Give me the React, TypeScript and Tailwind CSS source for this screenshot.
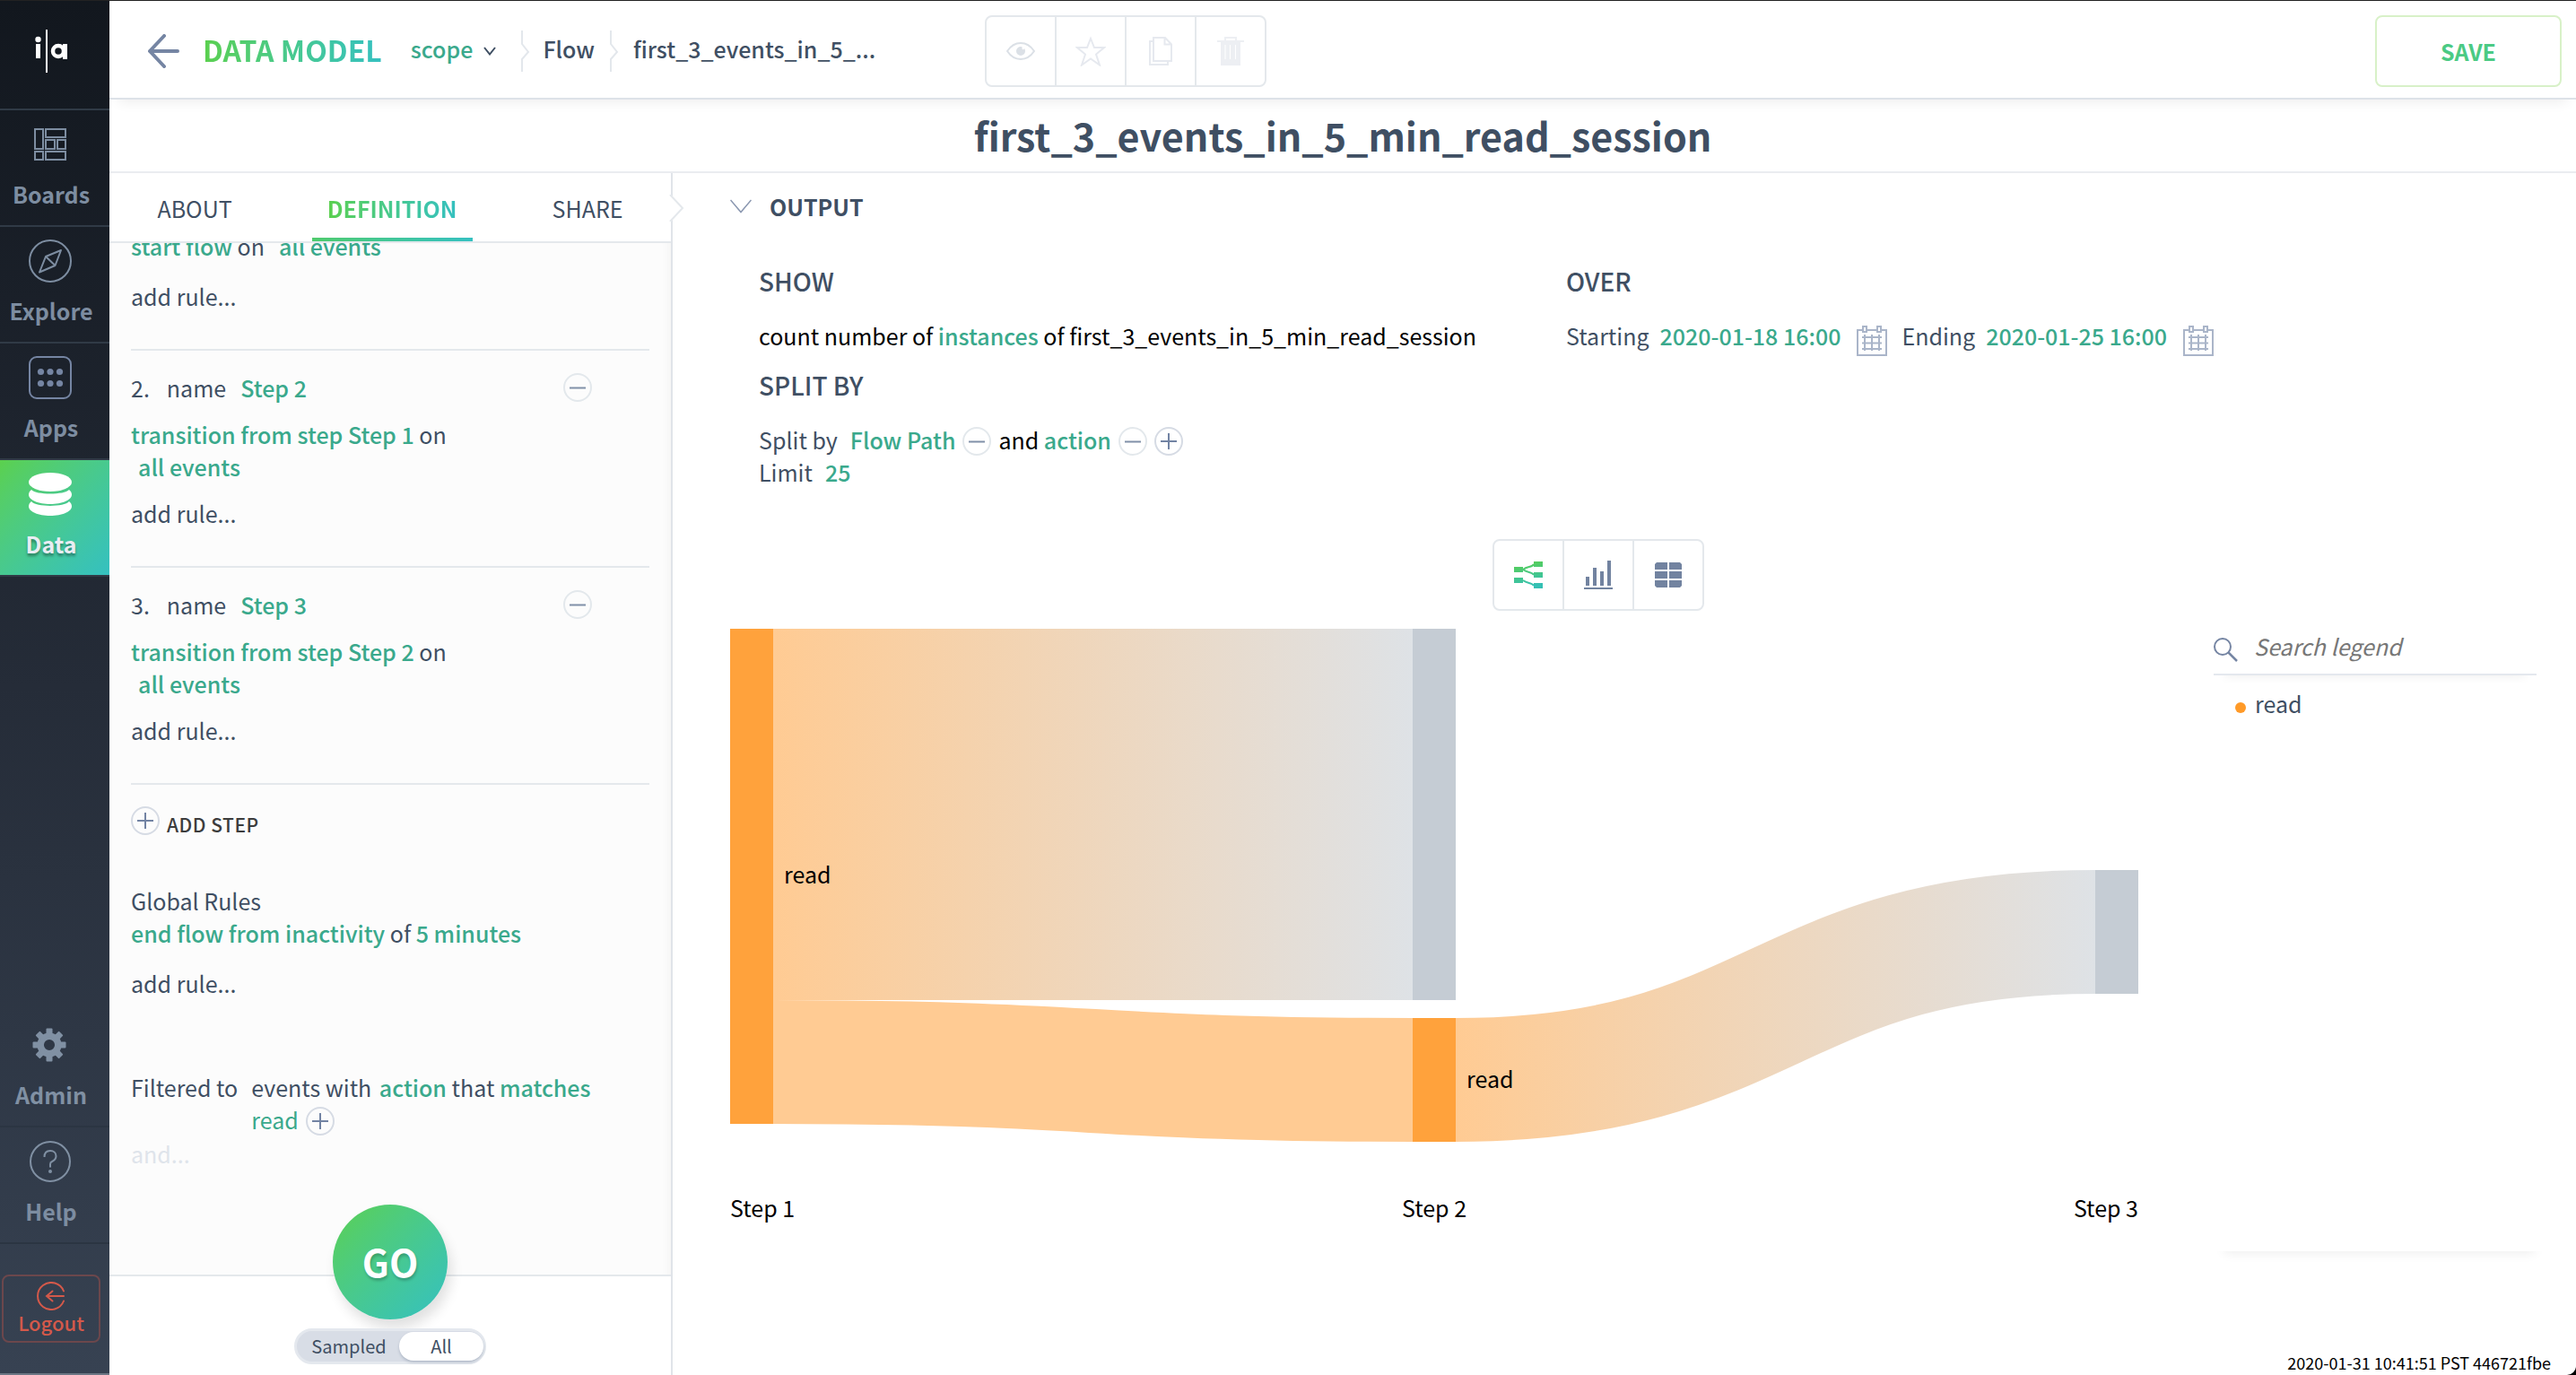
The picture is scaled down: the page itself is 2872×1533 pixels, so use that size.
import type { ReactNode } from "react";

function BoardsIcon() {
  return (
    <svg width="36" height="36" viewBox="0 0 36 36" fill="none" stroke="#7d8da1" strokeWidth="2">
      <rect x="1" y="1" width="9" height="22" />
      <rect x="13" y="1" width="22" height="9" />
      <rect x="13" y="13" width="10" height="10" />
      <rect x="26" y="13" width="9" height="10" />
      <rect x="1" y="26" width="9" height="9" />
      <rect x="13" y="26" width="22" height="9" />
    </svg>
  );
}

function CompassIcon() {
  return (
    <svg width="48" height="48" viewBox="0 0 48 48" fill="none" stroke="#7d8da1" strokeWidth="2" strokeLinejoin="round">
      <circle cx="24" cy="24" r="23" />
      <path d="M36 12 29.5 29 12 36.5 19 19Z M19 19 29.5 29" />
    </svg>
  );
}

function AppsIcon() {
  return (
    <svg width="48" height="48" viewBox="0 0 48 48" fill="none" stroke="#7585a3" strokeWidth="2">
      <rect x="1" y="1" width="46" height="46" rx="8" />
      <g fill="#7585a3" stroke="none">
        <circle cx="13.5" cy="17.5" r="3.6" />
        <circle cx="24" cy="17.5" r="3.6" />
        <circle cx="34.5" cy="17.5" r="3.6" />
        <circle cx="13.5" cy="30.5" r="3.6" />
        <circle cx="24" cy="30.5" r="3.6" />
        <circle cx="34.5" cy="30.5" r="3.6" />
      </g>
    </svg>
  );
}

function DatabaseIcon() {
  return (
    <svg width="48" height="48" viewBox="0 0 48 48" fill="#fff">
      <ellipse cx="24" cy="10.5" rx="24" ry="10.5" />
      <path d="M3 19C8 25 40 25 45 19 47 20.500 48 22.500 48 24.500 48 30.500 37 35 24 35S0 30.500 0 24.500C0 22.500 1 20.500 3 19Z" />
      <path d="M3 32C8 38.500 40 38.500 45 32 47 33.500 48 35.500 48 37.500 48 43.500 37 48 24 48S0 43.500 0 37.500C0 35.500 1 33.500 3 32Z" />
    </svg>
  );
}

function GearIcon() {
  return (
    <svg width="38" height="38" viewBox="-19 -19 38 38" fill="#8090a3">
      <circle r="9.800" fill="none" stroke="#8090a3" strokeWidth="7.500" />
      {[0, 45, 90, 135, 180, 225, 270, 315].map((a) => (
        <rect key={a} x="-3.500" y="-18.500" width="7" height="7" rx="1" transform={`rotate(${a})`} />
      ))}
    </svg>
  );
}

function HelpIcon() {
  return (
    <svg width="46" height="46" viewBox="0 0 46 46" fill="none" stroke="#8090a3" strokeWidth="2">
      <circle cx="23" cy="23" r="22" />
      <path d="M16.500 18C16.500 13.500 19 11 23 11S29.500 13.500 29.500 17 27 22 25 23C23.500 23.700 23 24.500 23 26V29.500" />
      <circle cx="23" cy="34" r="2" fill="#8090a3" stroke="none" />
    </svg>
  );
}

function LogoutIcon() {
  return (
    <svg width="32" height="32" viewBox="0 0 32 32" fill="none" stroke="#d4594a" strokeWidth="2" strokeLinecap="round">
      <path d="M30 10.500A15 15 0 1 0 30 21.500" />
      <path d="M30 16H11M17.500 10.500 11 16 17.500 21.500" />
    </svg>
  );
}

function PlusCircle() {
  return (
    <svg width="32" height="32" viewBox="0 0 32 32" fill="none" strokeWidth="2">
      <circle cx="16" cy="16" r="15" stroke="#d6dbe4" />
      <path d="M7 16H25M16 7V25" stroke="#7283a3" />
    </svg>
  );
}

function MinusCircle() {
  return (
    <svg width="32" height="32" viewBox="0 0 32 32" fill="none" strokeWidth="2">
      <circle cx="16" cy="16" r="15" stroke="#e3e8ec" />
      <path d="M7 16.500H25" stroke="#8090a8" />
    </svg>
  );
}

function IconButton({ label, children }: { label: string; children: ReactNode }) {
  return (
    <button type="button" aria-label={label} className="block shrink-0">
      {children}
    </button>
  );
}

function Calendar() {
  return (
    <svg width="34" height="34" viewBox="0 0 34 34" fill="none" stroke="#aab5c9" strokeWidth="2">
      <path d="M6 5H1V33H33V5H28M12 5H22" />
      <rect x="7" y="1" width="4" height="6" />
      <rect x="23" y="1" width="4" height="6" />
      <path d="M9 10V28M17 10V28M25 10V28M6 13H28M6 19.500H28M6 26H28" />
    </svg>
  );
}

function Chevron({ thin }: { thin?: boolean }) {
  return thin ? (
    <svg width="24" height="16" viewBox="0 0 24 16" fill="none" stroke="#8a97b0" strokeWidth="1.500">
      <path d="M0.500 1 12 14.500 23.500 1" />
    </svg>
  ) : (
    <svg width="14" height="10" viewBox="0 0 14 10" fill="none" stroke="#3f4f63" strokeWidth="2">
      <path d="M1 1 7 8.500 13 1" />
    </svg>
  );
}

function CrumbSeparator() {
  return (
    <svg width="10" height="46" viewBox="0 0 10 46" fill="none" stroke="#e3e7ec" strokeWidth="2">
      <path d="M1 0V15L8 24 1 32V46" />
    </svg>
  );
}

function NavItem({ icon, label, active, dim }: { icon: ReactNode; label: string; active?: boolean; dim?: boolean }) {
  const border = dim ? "border-[#2b3542]" : "border-[#303a46]";
  return (
    <div className={"border-t-2 " + border}>
      <a
        href="#"
        className={
          "flex h-32 flex-col items-center gap-[13px] pt-[14px] pr-2 text-[25px] leading-9 font-bold " +
          (active
            ? "bg-linear-to-br from-[#5bd04d] to-[#35c0c0] text-[#e9edf3] text-shadow-[0_3px_3px_rgba(0,0,0,0.35)]"
            : "text-[#7d8da1]")
        }
      >
        <span className="flex h-12 items-center pr-[2px]">{icon}</span>
        {label}
      </a>
    </div>
  );
}

function Sidebar() {
  return (
    <nav className="flex w-[122px] shrink-0 flex-col border-b-2 border-[#6b7684] bg-linear-to-b from-[#12171e] via-[#252c38] to-[#374252]">
      <a href="#" aria-label="Home" className="flex h-[120px] justify-center pt-8 pr-[6px]">
        <svg width="40" height="48" viewBox="0 0 40 48" fill="#fff">
          <circle cx="4.500" cy="11" r="3.200" />
          <rect x="2" y="16" width="5" height="16" />
          <rect x="13" y="0" width="2" height="48" />
          <circle cx="27" cy="24" r="6" fill="none" stroke="#fff" strokeWidth="4.500" />
          <rect x="32" y="16" width="5" height="17" />
        </svg>
      </a>
      <NavItem icon={<BoardsIcon />} label="Boards" />
      <NavItem icon={<CompassIcon />} label="Explore" />
      <NavItem icon={<AppsIcon />} label="Apps" />
      <NavItem icon={<DatabaseIcon />} label="Data" active />
      <div className="flex-1 border-t-2 border-[#303a46]" />
      <div>
        <a href="#" className="flex h-32 flex-col items-center gap-[13px] pt-[14px] pr-2 text-[25px] leading-9 font-bold text-[#8090a3]">
          <span className="flex h-12 items-center pr-1">
            <GearIcon />
          </span>
          Admin
        </a>
      </div>
      <NavItem icon={<HelpIcon />} label="Help" dim />
      <div className="border-t-2 border-[#2b3542] px-[2px] py-[34px]">
        <button
          type="button"
          className="flex h-[76px] w-[110px] flex-col items-center rounded-lg border-2 border-[#6c474c] pt-[6px] text-[22px] leading-[26px] font-medium text-[#d4594a]"
        >
          <LogoutIcon />
          Logout
        </button>
      </div>
    </nav>
  );
}

function Header() {
  return (
    <header className="relative flex h-[110px] shrink-0 items-start border-b-2 border-[#dde2e8] bg-white pt-4 pr-4 pl-[42px] shadow-[0_12px_14px_-10px_rgba(0,0,0,0.08)]">
      <div className="flex h-20 items-center text-[25px] leading-9 font-medium text-[#3f4f63]">
        <button type="button" aria-label="Back">
          <svg width="36" height="38" viewBox="0 0 36 38" fill="none" stroke="#7585a3" strokeWidth="4" strokeLinecap="round" strokeLinejoin="round">
            <path d="M34 19H3M19 2 3 19 19 36" />
          </svg>
        </button>
        <h1 className="ml-[26px] bg-linear-to-r from-[#5bd04d] to-[#35c0c0] bg-clip-text pb-1 text-[32px] leading-10 font-bold text-transparent">
          DATA MODEL
        </h1>
        <button type="button" className="ml-8 flex items-center gap-3 text-[#3aa98c]">
          <span className="pb-[6px]">scope</span>
          <Chevron />
        </button>
        <span className="ml-7">
          <CrumbSeparator />
        </span>
        <a href="#" className="ml-[14px] pb-[6px]">
          Flow
        </a>
        <span className="ml-[17px]">
          <CrumbSeparator />
        </span>
        <span className="ml-4 w-[392px] pb-[6px]">first_3_events_in_5_...</span>
      </div>
      <div className="flex h-20 divide-x-2 divide-[#e4e8ec] rounded-lg border-2 border-[#e4e8ec]">
        <button type="button" aria-label="Watch" className="flex w-[78px] items-center justify-center">
          <svg width="32" height="22" viewBox="0 0 32 22" fill="none" stroke="#dbe0e6" strokeWidth="2">
            <path d="M1 11C5 5 10 2 16 2S27 5 31 11C27 17 22 20 16 20S5 17 1 11Z" />
            <path d="M16 6A5 5 0 1 0 21 11C21 9.500 20.500 8.500 20 8L19 9.500 17.500 8.500 17.500 6.200Z" fill="#dbe0e6" stroke="none" />
          </svg>
        </button>
        <button type="button" aria-label="Favorite" className="flex w-[78px] items-center justify-center">
          <svg width="34" height="34" viewBox="0 0 34 34" fill="none" stroke="#e6e9ef" strokeWidth="2">
            <path d="M17 3 21 13H32L23 20.500 27 32.500 17 25.500 7 32.500 11 20.500 2 13H13Z" />
          </svg>
        </button>
        <button type="button" aria-label="Copy" className="flex w-[78px] items-center justify-center">
          <svg width="26" height="32" viewBox="0 0 26 32" fill="none" stroke="#e6e9ef" strokeWidth="2">
            <path d="M5 1H18L25 8.500V27H5ZM17.500 1V8.500H25M5 5H1V31H21V27" />
          </svg>
        </button>
        <button type="button" aria-label="Delete" className="flex w-[76px] items-center justify-center">
          <svg width="30" height="32" viewBox="0 0 30 32" fill="#edeff3">
            <path d="M0 4H8V0H22V4H30V6H26V32H4V6H0ZM10 4H20V2H10ZM8.500 9V25H9.500V9ZM14 9V25H15V9ZM20 9V25H21V9Z" fillRule="evenodd" />
          </svg>
        </button>
      </div>
      <button type="button" className="ml-auto h-20 w-52 rounded-lg border-2 border-[#d8f1c8] text-[25px] leading-9 font-bold text-[#4bca84]">
        SAVE
      </button>
    </header>
  );
}

const V = ({ children }: { children: ReactNode }) => <span className="font-medium text-[#3aa98c]">{children}</span>;

function Step({ n, from }: { n: number; from: string }) {
  return (
    <section className="border-b-2 border-[#e4e8ec] pt-[23px] pb-[41px]">
      <div className="flex items-center pr-16">
        <span>{n}.</span>
        <span className="mr-4 ml-[19px]">name</span>
        <V>Step {n}</V>
        <span className="-my-4 ml-auto">
          <IconButton label={`Remove step ${n}`}>
            <MinusCircle />
          </IconButton>
        </span>
      </div>
      <p className="mt-4">
        <V>transition from step {from}</V> on
      </p>
      <p className="pl-2">
        <V>all events</V>
      </p>
      <p className="mt-4">add rule...</p>
    </section>
  );
}

function DefinitionPanel() {
  return (
    <aside className="relative flex w-[628px] shrink-0 flex-col border-r-2 border-[#e0e4e9] text-[25px] leading-9 text-[#3f4f63]">
      <div role="tablist" className="flex h-[78px] shrink-0 justify-center gap-[72px] border-b-2 border-[#e4e8ec]">
        <button type="button" role="tab" className="px-[17px] pt-[2px]">
          ABOUT
        </button>
        <button type="button" role="tab" aria-selected="true" className="relative px-[17px] pt-[2px] font-bold">
          <span className="bg-linear-to-r from-[#5bd04d] to-[#35c0c0] bg-clip-text text-transparent">DEFINITION</span>
          <span className="absolute inset-x-0 bottom-0 h-1 bg-linear-to-r from-[#4fcb6c] to-[#35c0c0]" />
        </button>
        <button type="button" role="tab" className="px-[17px] pt-[2px]">
          SHARE
        </button>
      </div>
      <svg className="absolute top-6 -right-4" width="18" height="30" viewBox="0 0 18 30">
        <path d="M0 0H2L15 15 2 30H0Z" fill="#fff" />
        <path d="M1 0 15 15 1 30" fill="none" stroke="#e4e8ec" strokeWidth="2" />
      </svg>
      <div className="min-h-0 flex-1 overflow-hidden bg-[#fcfcfc] px-6 shadow-[inset_-14px_0_12px_-12px_rgba(0,0,0,0.04)]">
        <section className="-mt-[15px] border-b-2 border-[#e4e8ec] pb-[41px]">
          <p>
            <V>start flow</V> on
            <span className="ml-4">
              <V>all events</V>
            </span>
          </p>
          <p className="mt-5">add rule...</p>
        </section>
        <Step n={2} from="Step 1" />
        <Step n={3} from="Step 2" />
        <button type="button" className="mt-6 flex h-8 items-center gap-2 text-[21px] leading-5 font-medium text-[#3c3c3c]">
          <PlusCircle />
          <span className="pt-2 tracking-wide">ADD STEP</span>
        </button>
        <p className="mt-[55px]">Global Rules</p>
        <p>
          <V>end flow from inactivity</V> of <V>5 minutes</V>
        </p>
        <p className="mt-5">add rule...</p>
        <div className="mt-20 flex gap-[15px]">
          <span>Filtered to</span>
          <div>
            <p>
              events with{" "}
              <span className="ml-[3px]">
                <V>action</V>
              </span>{" "}
              that <V>matches</V>
            </p>
            <div className="flex items-center gap-2 text-[#3aa98c]">
              read
              <span className="pt-1">
                <IconButton label="Add value">
                  <PlusCircle />
                </IconButton>
              </span>
            </div>
          </div>
        </div>
        <p className="mt-[2px] text-[#dfe4eb]">and...</p>
      </div>
      <div className="flex h-28 shrink-0 flex-col items-center border-t-2 border-[#e4e8ec] bg-white">
        <button
          type="button"
          className="relative -mt-[80px] size-32 shrink-0 rounded-full bg-linear-to-br from-[#5bd04d] to-[#35c0c0] pb-[2px] text-[42px] font-bold text-white shadow-[4px_10px_14px_rgba(0,0,0,0.12)] text-shadow-[1px_3px_3px_rgba(0,0,0,0.2)]"
        >
          GO
        </button>
        <div className="relative mt-[10px] flex h-10 w-[214px] shrink-0 items-center rounded-full border-[3px] border-[#e4e8ee] bg-[#d8dde6] text-xl leading-8">
          <label className="flex-1 pl-[2px] text-center">
            <input type="radio" name="sampling" className="sr-only" />
            Sampled
          </label>
          <label className="h-8 w-[94px] rounded-full bg-white text-center shadow-[0_2px_3px_rgba(60,80,110,0.25)]">
            <input type="radio" name="sampling" className="sr-only" defaultChecked />
            All
          </label>
        </div>
      </div>
    </aside>
  );
}

function SankeyChart() {
  return (
    <svg viewBox="0 0 1570 572" className="block w-full" role="img" aria-label="Event flow across three steps">
      <defs>
        <linearGradient id="fadeA" gradientUnits="userSpaceOnUse" x1="48" x2="761" y1="0" y2="0">
          <stop offset="0" stopColor="#ffcb93" />
          <stop offset="1" stopColor="#dee2e6" />
        </linearGradient>
        <linearGradient id="fadeB" gradientUnits="userSpaceOnUse" x1="809" x2="1522" y1="0" y2="0">
          <stop offset="0" stopColor="#ffcb93" />
          <stop offset="1" stopColor="#dee2e6" />
        </linearGradient>
      </defs>
      <rect x="48" y="0" width="713" height="414" fill="url(#fadeA)" />
      <path d="M48 483C404 483 404 503 761 503" fill="none" stroke="#ffcb93" strokeWidth="138" />
      <path d="M809 503C1165 503 1165 338 1522 338" fill="none" stroke="url(#fadeB)" strokeWidth="138" />
      <rect x="0" y="0" width="48" height="552" fill="#ffa23c" />
      <rect x="761" y="0" width="48" height="414" fill="#c5ccd4" />
      <rect x="761" y="434" width="48" height="138" fill="#ffa23c" />
      <rect x="1522" y="269" width="48" height="138" fill="#c5ccd4" />
      <text x="60" y="284" fontSize="25">
        read
      </text>
      <text x="821" y="512" fontSize="25">
        read
      </text>
    </svg>
  );
}

function DateField({ label, value }: { label: string; value: string }) {
  return (
    <div className="flex gap-3">
      <span>{label}</span>
      <V>{value}</V>
      <span className="ml-[6px] -mb-2 pt-[7px]">
        <IconButton label={`Pick ${label.toLowerCase()} date`}>
          <Calendar />
        </IconButton>
      </span>
    </div>
  );
}

function Output() {
  return (
    <main className="flex min-w-0 flex-1 flex-col pt-[19px] text-[25px] leading-9 text-black">
      <button type="button" className="ml-16 flex items-center gap-5 self-start font-bold text-[#3f4f63]">
        <Chevron thin />
        OUTPUT
      </button>
      <div className="mt-[45px] grid grid-cols-2 pr-[226px] pl-24">
        <section>
          <h3 className="text-[28px] leading-10 font-medium text-[#3f4f63]">SHOW</h3>
          <p className="mt-[23px]">
            count number of <V>instances</V> of first_3_events_in_5_min_read_session
          </p>
          <h3 className="mt-[17px] text-[28px] leading-10 font-medium text-[#3f4f63]">SPLIT BY</h3>
          <div className="mt-[23px] flex items-center gap-2 whitespace-nowrap">
            <span className="mr-[6px] text-[#3f4f63]">Split by</span>
            <V>Flow Path</V>
            <span className="pt-1">
              <IconButton label="Remove Flow Path">
                <MinusCircle />
              </IconButton>
            </span>
            <span>
              and <V>action</V>
            </span>
            <span className="pt-1">
              <IconButton label="Remove action">
                <MinusCircle />
              </IconButton>
            </span>
            <span className="pt-1">
              <IconButton label="Add split">
                <PlusCircle />
              </IconButton>
            </span>
          </div>
          <p className="text-[#3f4f63]">
            <span className="mr-[14px]">Limit</span>
            <V>25</V>
          </p>
        </section>
        <section>
          <h3 className="text-[28px] leading-10 font-medium text-[#3f4f63]">OVER</h3>
          <div className="mt-[23px] flex gap-4 whitespace-nowrap text-[#3f4f63]">
            <DateField label="Starting" value="2020-01-18 16:00" />
            <DateField label="Ending" value="2020-01-25 16:00" />
          </div>
        </section>
      </div>
      <div className="mt-[57px] flex justify-center pr-[122px] pl-16">
        <div className="flex h-20 divide-x-2 divide-[#e4e8ec] rounded-lg border-2 border-[#e4e8ec]">
          <button type="button" aria-label="Flow chart" className="flex w-[78px] items-center justify-center">
            <svg width="32" height="30" viewBox="0 0 32 30">
              <defs>
                <linearGradient id="flow" gradientUnits="userSpaceOnUse" x1="0" y1="0" x2="6" y2="30">
                  <stop offset="0" stopColor="#5bd04d" />
                  <stop offset="1" stopColor="#35c0b4" />
                </linearGradient>
              </defs>
              <path
                d="M0 6H10V12H0ZM22 0H32V6H22ZM22 12H32V18H22ZM0 18H10V24H0ZM22 24H32V30H22Z"
                fill="url(#flow)"
              />
              <path d="M10 9C15 5 20 7 22 3M10 9C15 13 20 11 22 15M10 21C15 25 20 23 22 27" fill="none" stroke="url(#flow)" strokeWidth="2" />
            </svg>
          </button>
          <button type="button" aria-label="Bar chart" className="flex w-[78px] items-center justify-center">
            <svg width="32" height="32" viewBox="0 0 32 32" fill="#7283a0">
              <path d="M0 30H32V32H0ZM2 18H6V28H2ZM10 8H14V28H10ZM18 12H22V28H18ZM26 0H30V28H26Z" />
            </svg>
          </button>
          <button type="button" aria-label="Table" className="flex w-[76px] items-center justify-center">
            <svg width="30" height="28" viewBox="0 0 30 28" fill="#7283a0">
              <path d="M2 0H14V8H0V2ZM16 0H28L30 2V8H16ZM0 10H14V18H0ZM16 10H30V18H16ZM0 20H14V28H2L0 26ZM16 20H30V26L28 28H16Z" />
            </svg>
          </button>
        </div>
      </div>
      <div className="mt-5 flex gap-[84px] pr-[34px] pl-16">
        <div className="min-w-0 flex-1">
          <SankeyChart />
          <div className="mt-[55px] flex justify-between">
            <span>Step 1</span>
            <span>Step 2</span>
            <span>Step 3</span>
          </div>
        </div>
        <div className="flex h-[694px] w-[370px] shrink-0 flex-col">
          <label className="mr-[10px] flex h-[52px] items-center gap-[18px] border-b-2 border-[#e4e8ee] pb-3 shadow-[0_12px_12px_-12px_rgba(0,0,0,0.08)]">
            <svg className="mt-2 shrink-0" width="27" height="27" viewBox="0 0 27 27" fill="none" stroke="#7585a3" strokeWidth="2">
              <circle cx="10" cy="10" r="9" />
              <path d="M16.500 16.500 26 26" strokeWidth="2.500" />
            </svg>
            <input
              type="text"
              aria-label="Search legend"
              placeholder="Search legend"
              className="min-w-0 flex-1 italic placeholder:text-[#777] focus:outline-none"
            />
          </label>
          <ul className="flex-1 pt-[13px] pl-6 text-[#3f4f63] shadow-[0_14px_12px_-12px_rgba(0,0,0,0.07)]">
            <li className="flex items-center gap-[10px]">
              <span className="mt-[9px] size-3 rounded-full bg-[#ff9a28]" />
              read
            </li>
          </ul>
        </div>
      </div>
      <p className="mt-auto mr-7 self-end text-lg leading-7">2020-01-31 10:41:51 PST 446721fbe</p>
    </main>
  );
}

export default function App() {
  return (
    <div className="h-screen min-h-[1500px] bg-black font-['Noto_Sans_CJK_SC',sans-serif]">
      <div className="flex h-full overflow-hidden rounded-br-[10px] border-t border-[#222] bg-white">
        <Sidebar />
        <div className="flex min-w-0 flex-1 flex-col">
          <Header />
          <div className="flex h-[82px] shrink-0 items-center justify-center border-b-2 border-[#eaecf0] pb-[2px]">
            <h2 className="text-[43px] leading-[60px] font-bold text-[#3f4f63]">first_3_events_in_5_min_read_session</h2>
          </div>
          <div className="flex min-h-0 flex-1">
            <DefinitionPanel />
            <Output />
          </div>
        </div>
      </div>
    </div>
  );
}
